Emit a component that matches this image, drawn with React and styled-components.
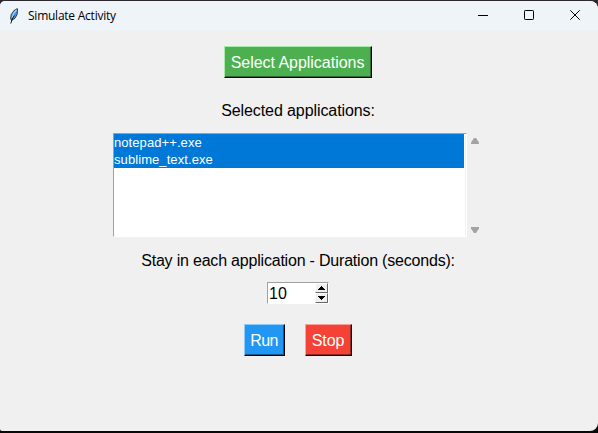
import React from 'react';
import styled, { createGlobalStyle } from 'styled-components';

const GlobalStyle = createGlobalStyle`
  * { box-sizing: border-box; }
  body { margin: 0; background: #111; overflow: hidden; }
`;

const Desktop = styled.div`
  width: 598px;
  height: 433px;
  padding: 1px 0 2px;
  background: linear-gradient(#2b292d 0 50%, #080808 50%);
`;

const Window = styled.main`
  display: flex;
  flex-direction: column;
  height: 430px;
  overflow: hidden;
  border-radius: 5px 8px 8px 2px;
  background: #f0f0f0;
  color: #000;
  font: 16px/18px "Liberation Sans", Arial, sans-serif;
`;

const TitleBar = styled.header`
  display: flex;
  align-items: center;
  height: 30px;
  flex: none;
  padding-left: 7px;
  background: #eff4f9;
`;

const Title = styled.h1`
  flex: 1;
  margin: 0 0 0 7px;
  font: 400 12px/16px "Open Sans", "Noto Sans", sans-serif;
  letter-spacing: -0.24px;
`;

const CaptionButton = styled.button`
  display: grid;
  place-items: center;
  width: 46px;
  height: 30px;
  padding: 0 0 2px;
  border: 0;
  background: transparent;
`;

const Content = styled.section`
  display: flex;
  flex-direction: column;
  align-items: center;
  padding: 15px 2px 0 0;
`;

const tones = {
  green: { face: '#4caf50', light: '#a8eaaa', dark: '#2e6930' },
  blue: { face: '#2196f3', light: '#90caf9', dark: '#145a92' },
  red: { face: '#f44336', light: '#faa19b', dark: '#922820' },
};

const ActionButton = styled.button`
  width: ${({ $width }) => $width}px;
  height: 32px;
  padding: 2px 1px 0 0;
  border: 1px solid;
  border-color: ${({ $tone }) => tones[$tone].light} #000 #000 ${({ $tone }) => tones[$tone].light};
  background: ${({ $tone }) => tones[$tone].face};
  box-shadow: inset -1px -1px ${({ $tone }) => tones[$tone].dark};
  color: #fff;
  font: inherit;
  letter-spacing: ${({ $spacing = 0 }) => $spacing}px;
  white-space: nowrap;
`;

const Label = styled.label`
  margin-top: ${({ $top }) => $top}px;
  height: 18px;
  letter-spacing: ${({ $spacing = 0 }) => $spacing}px;
  white-space: nowrap;
`;

const ListRow = styled.div`
  display: flex;
  width: 370px;
  height: 104px;
  margin-top: 13px;
`;

const ListBox = styled.ul`
  flex: none;
  width: 354px;
  height: 104px;
  margin: 0;
  padding: 0 1px 0 0;
  list-style: none;
  background: #fff;
  border: 1px solid;
  border-color: #a0a0a0 #fff #fff #a0a0a0;
  box-shadow: inset -1px 0 #f0f0f0;
`;

const ListItem = styled.li`
  height: 17px;
  line-height: 18px;
  margin-right: 1px;
  font-size: 13px;
  letter-spacing: 0.08px;
  background: #0078d7;
  color: #fff;
`;

const ScrollBar = styled.div`
  display: flex;
  flex: none;
  flex-direction: column;
  justify-content: space-between;
  width: 16px;
  padding: 5px 0 4px 4px;
`;

const SpinBox = styled.div`
  display: flex;
  width: 62px;
  height: 22px;
  margin-top: 12px;
  border: 1px solid;
  border-color: #a0a0a0 #fff #fff #a0a0a0;
  background: #fff;
`;

const SpinValue = styled.output`
  flex: 1;
  padding-left: 1px;
  line-height: 22px;
`;

const SpinButtons = styled.div`
  display: grid;
  grid-template-rows: 10px 10px;
  width: 13px;
  height: 20px;
`;

const SpinButton = styled.button`
  display: grid;
  place-items: center;
  padding: 0;
  border: 1px solid;
  border-color: #fff #696969 #696969 #fff;
  background: #f0f0f0;
`;

const Actions = styled.div`
  display: flex;
  gap: 20px;
  margin-top: 20px;
`;

function Feather() {
  return (
    <svg width="14" height="18" viewBox="0 0 14 18">
      <path d="M10.3 1.6 10.6 3l-.5 4.5-2.1 3.8-3.4 2.2-1-1.7.6-4.2 2.8-4Z" fill="#4b91dc" stroke="#26323d" strokeWidth=".9" />
      <path d="M9.5 3 6.5 6.5 5 11" fill="none" stroke="#a8d4ff" strokeWidth="1.2" />
      <path d="M7.3 8.5 5.2 12l-1.4 4.5" fill="none" stroke="#101820" strokeWidth="1" />
    </svg>
  );
}

function Arrow({ down }) {
  return (
    <svg width="8" height="6" viewBox="0 0 8 6">
      <path d={down ? 'M0 0h8v1.5L5 6H3L0 1.5Z' : 'M0 6h8V4.5L5 0H3L0 4.5Z'} fill="#a3a3a3" />
    </svg>
  );
}

function SpinArrow({ down }) {
  return (
    <svg width="7" height="4" viewBox="0 0 7 4" shapeRendering="crispEdges">
      <path d={down ? 'M0 0h7v1H6v1H5v1H4v1H3V3H2V2H1V1H0Z' : 'M3 0h1v1h1v1h1v1h1v1H0V3h1V2h1V1h1Z'} />
    </svg>
  );
}

export default function App() {
  return (
    <Desktop>
      <GlobalStyle />
      <Window>
        <TitleBar>
          <Feather />
          <Title>Simulate Activity</Title>
          <CaptionButton aria-label="Minimize">
            <svg width="10" height="10"><path d="M0 5.5h10" stroke="#000" /></svg>
          </CaptionButton>
          <CaptionButton aria-label="Maximize">
            <svg width="10" height="10"><rect x=".5" y=".5" width="9" height="9" rx=".7" fill="none" stroke="#000" /></svg>
          </CaptionButton>
          <CaptionButton aria-label="Close">
            <svg width="10" height="10"><path d="m.3.3 9.4 9.4m0-9.4L.3 9.7" stroke="#000" /></svg>
          </CaptionButton>
        </TitleBar>
        <Content>
          <ActionButton $tone="green" $width={148} $spacing={-0.03}>Select Applications</ActionButton>
          <Label $top={24} $spacing={-0.09}>Selected applications:</Label>
          <ListRow>
            <ListBox>
              <ListItem>notepad++.exe</ListItem>
              <ListItem>sublime_text.exe</ListItem>
            </ListBox>
            <ScrollBar><Arrow /><Arrow down /></ScrollBar>
          </ListRow>
          <Label $top={15} $spacing={-0.2}>Stay in each application - Duration (seconds):</Label>
          <SpinBox>
            <SpinValue>10</SpinValue>
            <SpinButtons>
              <SpinButton aria-label="Increase"><SpinArrow /></SpinButton>
              <SpinButton aria-label="Decrease"><SpinArrow down /></SpinButton>
            </SpinButtons>
          </SpinBox>
          <Actions>
            <ActionButton $tone="blue" $width={41} $spacing={-0.6}>Run</ActionButton>
            <ActionButton $tone="red" $width={47} $spacing={-0.15}>Stop</ActionButton>
          </Actions>
        </Content>
      </Window>
    </Desktop>
  );
}
